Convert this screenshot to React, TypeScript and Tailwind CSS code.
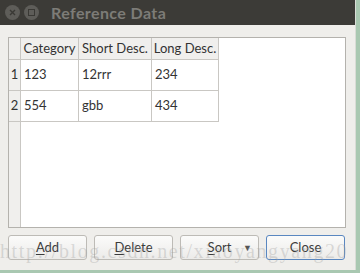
import React from 'react';

const rows = [
  { n: '1', category: '123', short: '12rrr', long: '234' },
  { n: '2', category: '554', short: 'gbb', long: '434' },
];

const font = { fontFamily: 'Lato, "Noto Sans", sans-serif' };

const Btn: React.FC<{ mnemonic: string; rest: string; primary?: boolean; menu?: boolean }> = ({
  mnemonic,
  rest,
  primary,
  menu,
}) => (
  <button
    className={`relative flex h-[25px] w-[79px] items-center justify-center rounded-[3px] border bg-gradient-to-b from-[#fbfbfa] to-[#ecebe9] text-[13px] text-[#3c3c3c] ${
      primary ? 'border-[#5a87c0]' : 'border-[#bdbbb6]'
    }`}
  >
    <span>
      <span className="underline underline-offset-2">{mnemonic}</span>
      {rest}
    </span>
    {menu && <span className="absolute right-[6px] top-[5px] text-[9px] text-[#555]">▼</span>}
  </button>
);

export default function App() {
  return (
    <div className="relative flex h-[273px] w-[360px] flex-col bg-[#a9c8b1]" style={font}>
      <div className="flex h-[270px] w-[356px] flex-col border-r border-[#d9dcd6] bg-[#efeeeb]">
        {/* title bar */}
        <div className="flex h-[25px] shrink-0 items-center bg-[#3c3b37] pl-[5px]">
          <div className="flex h-[15px] w-[15px] items-center justify-center rounded-full bg-[#5e5d59]">
            <svg width="7" height="7" viewBox="0 0 7 7">
              <path d="M1 1L6 6M6 1L1 6" stroke="#3a3935" strokeWidth="1.4" />
            </svg>
          </div>
          <div className="ml-[4px] flex h-[15px] w-[15px] items-center justify-center rounded-full bg-[#5e5d59]">
            <div className="h-[7px] w-[7px] border-[1.5px] border-[#3a3935]" />
          </div>
          <span className="ml-[12px] text-[16px] font-bold tracking-[0.4px] text-[#7d7c77]">Reference Data</span>
        </div>

        {/* body */}
        <div className="flex flex-1 flex-col px-[8px] pt-[12px]">
          <div className="flex h-[191px] w-[338px] border border-[#b4b2ad] bg-white">
            <div className="flex w-[12px] flex-col border-r border-[#c9c7c3] bg-[#f0efed]">
              <div className="h-[22px] border-b border-[#c9c7c3]" />
              {rows.map((r) => (
                <div
                  key={r.n}
                  className="flex h-[31px] items-center justify-center border-b border-[#c9c7c3] text-[13px] text-[#333]"
                >
                  {r.n}
                </div>
              ))}
            </div>
            <div className="flex flex-col">
              <div className="flex h-[22px] border-b border-[#c9c7c3] bg-[#f0efed] text-[13px] text-[#333]">
                <div className="flex w-[58px] items-center justify-center border-r border-[#c9c7c3]">Category</div>
                <div className="flex w-[73px] items-center justify-center border-r border-[#c9c7c3]">Short Desc.</div>
                <div className="flex w-[67px] items-center justify-center border-r border-[#c9c7c3]">Long Desc.</div>
              </div>
              {rows.map((r) => (
                <div key={r.n} className="flex h-[31px] text-[13px] text-[#333]">
                  <div className="flex w-[58px] items-center border-b border-r border-[#c9c7c3] pl-[3px]">{r.category}</div>
                  <div className="flex w-[73px] items-center border-b border-r border-[#c9c7c3] pl-[3px]">{r.short}</div>
                  <div className="flex w-[67px] items-center border-b border-r border-[#c9c7c3] pl-[3px]">{r.long}</div>
                </div>
              ))}
            </div>
          </div>

          <div className="mt-[7px] flex gap-[7px]">
            <Btn mnemonic="A" rest="dd" />
            <Btn mnemonic="D" rest="elete" />
            <Btn mnemonic="S" rest="ort" menu />
            <Btn mnemonic="" rest="Close" primary />
          </div>
        </div>
      </div>

      {/* watermark */}
      <div
        className="pointer-events-none absolute left-0 top-[236px] whitespace-nowrap text-[20px] tracking-[1.6px] text-[#a0a0a0]/35"
        style={{ fontFamily: '"Liberation Serif", serif' }}
      >
        http://blog.csdn.net/xiaoyangyang20
      </div>
    </div>
  );
}
